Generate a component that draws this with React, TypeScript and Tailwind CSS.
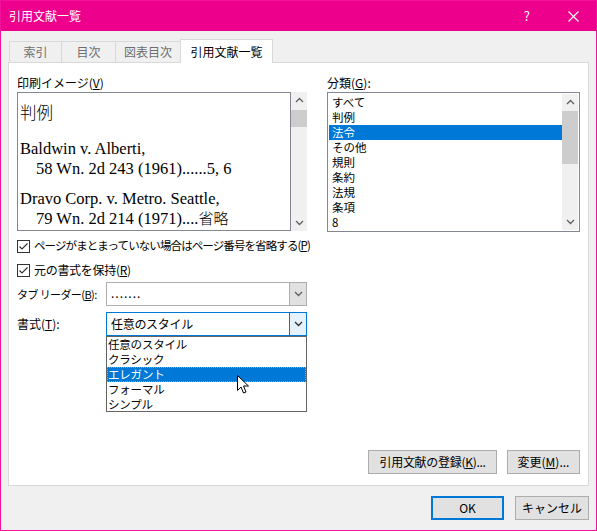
import React from 'react';

const ui = { fontFamily: '"Noto Sans CJK JP", "Noto Sans", sans-serif' };
const serif = { fontFamily: '"Liberation Serif", "Noto Sans CJK JP", serif' };

function Chevron({ dir = 'down', className = '' }: { dir?: 'up' | 'down'; className?: string }) {
    return (
        <svg width="9" height="6" viewBox="0 0 9 6" className={className}>
            <path
                d={dir === 'down' ? 'M1 1 L4.5 4.5 L8 1' : 'M1 5 L4.5 1.5 L8 5'}
                fill="none"
                stroke="currentColor"
                strokeWidth="1.3"
            />
        </svg>
    );
}

function Check({ label, hot, tight = false }: { label: string; hot: string; tight?: boolean }) {
    return (
        <div className="flex items-center h-[18px] gap-[4px]">
            <svg width="13" height="13" viewBox="0 0 13 13" className="shrink-0">
                <rect x="0.5" y="0.5" width="12" height="12" fill="#fff" stroke="#333" />
                <path d="M2.5 6.5 L5 9 L10.5 3.5" fill="none" stroke="#333" strokeWidth="1.2" />
            </svg>
            <span
                className={
                    'whitespace-nowrap text-black ' +
                    (tight ? 'text-[11.5px] tracking-[-0.9px]' : 'text-[12px] tracking-[-0.3px]')
                }
            >
                {label}(<span className="underline">{hot}</span>)
            </span>
        </div>
    );
}

function ScrollBar({ thumbTop, thumbH }: { thumbTop: number; thumbH: number }) {
    return (
        <div className="w-[16px] h-full bg-[#f0f0f0] relative flex flex-col items-center justify-between py-[5px] text-[#606060]">
            <Chevron dir="up" />
            <div
                className="absolute left-0 w-[16px] bg-[#cdcdcd]"
                style={{ top: thumbTop, height: thumbH }}
            />
            <Chevron dir="down" />
        </div>
    );
}

const categories = ['すべて', '判例', '法令', 'その他', '規則', '条約', '法規', '条項', '8'];
const styles = ['任意のスタイル', 'クラシック', 'エレガント', 'フォーマル', 'シンプル'];

export default function App() {
    return (
        <div
            className="w-[597px] h-[531px] border border-[#f3109a] bg-[#f0f0f0] flex flex-col overflow-hidden"
            style={ui}
        >
            {/* title bar */}
            <div className="h-[30px] bg-[#ec008c] flex items-center pl-[8px] text-white text-[12px] shrink-0">
                <span>引用文献一覧</span>
                <span className="ml-auto mr-[38px] text-[13px]">?</span>
                <svg width="11" height="11" viewBox="0 0 11 11" className="mr-[17px]">
                    <path d="M0.5 0.5 L10.5 10.5 M10.5 0.5 L0.5 10.5" stroke="#fff" strokeWidth="1.1" />
                </svg>
            </div>

            <div className="pl-[7px] pr-[7px] pt-[8px] flex flex-col">
                {/* tabs */}
                <div className="flex items-end h-[23px] pl-[1px] relative z-10">
                    {['索引', '目次', '図表目次'].map((t, i) => (
                        <div
                            key={t}
                            className={
                                'h-[21px] border-t border-l border-[#d9d9d9] flex items-center justify-center text-[12px] text-[#6d6d6d] ' +
                                (i === 0 ? 'w-[52px]' : i === 1 ? 'w-[54px]' : 'w-[65px]')
                            }
                        >
                            {t}
                        </div>
                    ))}
                    <div className="h-[24px] w-[93px] -mb-px bg-white border-t border-l border-r border-[#d9d9d9] flex items-center justify-center text-[12px] text-black">
                        引用文献一覧
                    </div>
                </div>

                {/* panel */}
                <div className="w-[581px] h-[424px] bg-white border border-[#d9d9d9] flex flex-col pl-[8px] pt-[11px] pr-[8px] pb-[11px]">
                    <div className="flex">
                        {/* left column */}
                        <div className="w-[290px] flex flex-col">
                            <div className="h-[18px] text-[12px] leading-[18px] text-black">
                                印刷イメージ(<span className="underline">V</span>)
                            </div>
                            <div className="h-[139px] flex">
                                <div
                                    className="w-[274px] h-full border border-[#828790] bg-white pl-[2px] pt-[11px] text-[16.5px] leading-[20px] text-black overflow-hidden whitespace-nowrap"
                                    style={serif}
                                >
                                    <div className="mb-[15px] font-light">判例</div>
                                    <div>Baldwin v. Alberti,</div>
                                    <div className="pl-[16px] mb-[10px]">58 Wn. 2d 243 (1961)......5, 6</div>
                                    <div>Dravo Corp. v. Metro. Seattle,</div>
                                    <div className="pl-[16px]">
                                        79 Wn. 2d 214 (1971)....<span className="text-[15px] font-light">省略</span>
                                    </div>
                                </div>
                                <ScrollBar thumbTop={18} thumbH={17} />
                            </div>

                            <div className="mt-[6px]">
                                <Check label="ページがまとまっていない場合はページ番号を省略する" hot="P" tight />
                            </div>
                            <div className="mt-[6px]">
                                <Check label="元の書式を保持" hot="R" />
                            </div>

                            <div className="mt-[3px] flex items-center h-[24px]">
                                <div className="w-[89px] text-[11px] text-black whitespace-nowrap tracking-[-0.6px]">
                                    タブ リーダー(<span className="underline">B</span>):
                                </div>
                                <div className="w-[201px] h-full border border-[#adadad] bg-white flex">
                                    <div className="flex-1 pl-[4px] text-[12px] leading-[20px] text-black tracking-[1px]">
                                        .......
                                    </div>
                                    <div className="w-[17px] h-full bg-[#e1e1e1] border-l border-[#adadad] flex items-center justify-center text-[#606060]">
                                        <Chevron />
                                    </div>
                                </div>
                            </div>

                            <div className="mt-[6px] flex items-center h-[24px] relative">
                                <div className="w-[89px] text-[12px] text-black whitespace-nowrap">
                                    書式(<span className="underline">T</span>):
                                </div>
                                <div className="w-[201px] h-full border border-[#0078d7] bg-white flex">
                                    <div className="flex-1 pl-[4px] text-[12px] leading-[22px] text-black tracking-[-0.3px]">
                                        任意のスタイル
                                    </div>
                                    <div className="w-[17px] h-full bg-[#e5f1fb] border-l border-[#0078d7] flex items-center justify-center text-[#303030]">
                                        <Chevron />
                                    </div>
                                </div>

                                {/* dropdown list */}
                                <div className="absolute left-[89px] top-[24px] w-[201px] h-[76px] bg-white border border-[#646464] flex flex-col z-20">
                                    {styles.map(s => (
                                        <div
                                            key={s}
                                            className={
                                                'h-[15px] leading-[15px] text-[11.5px] pl-[1px] tracking-[-0.2px] ' +
                                                (s === 'エレガント'
                                                    ? 'bg-[#0078d7] text-white outline-1 outline-dotted outline-[#ff8c00] -outline-offset-1'
                                                    : 'text-black')
                                            }
                                        >
                                            {s}
                                        </div>
                                    ))}
                                </div>
                                {/* mouse pointer */}
                                <svg
                                    width="13"
                                    height="20"
                                    viewBox="0 0 13 20"
                                    className="absolute left-[220px] top-[63px] z-30"
                                >
                                    <path
                                        d="M0.5 0.5 L0.5 15.5 L4 12 L6.5 18 L9 17 L6.5 11 L11.5 11 Z"
                                        fill="#fff"
                                        stroke="#000"
                                        strokeWidth="1"
                                    />
                                </svg>
                            </div>
                        </div>

                        {/* right column */}
                        <div className="w-[254px] ml-[20px] flex flex-col">
                            <div className="h-[18px] text-[12px] leading-[18px] text-black">
                                分類(<span className="underline">G</span>):
                            </div>
                            <div className="h-[140px] border border-[#828790] bg-white flex p-px">
                                <div className="flex-1 flex flex-col pt-px">
                                    {categories.map(c => (
                                        <div
                                            key={c}
                                            className={
                                                'h-[15px] leading-[15px] text-[11.5px] pl-[3px] ' +
                                                (c === '法令' ? 'bg-[#0078d7] text-white' : 'text-black')
                                            }
                                        >
                                            {c}
                                        </div>
                                    ))}
                                </div>
                                <ScrollBar thumbTop={17} thumbH={53} />
                            </div>
                        </div>
                    </div>

                    <div className="flex-1" />

                    <div className="flex justify-end gap-[10px]">
                        <button className="w-[129px] h-[24px] bg-[#e1e1e1] border border-[#adadad] text-[12px] text-black whitespace-nowrap tracking-[-0.3px]">
                            引用文献の登録(<span className="underline">K</span>)...
                        </button>
                        <button className="w-[73px] h-[24px] bg-[#e1e1e1] border border-[#adadad] text-[12px] text-black whitespace-nowrap">
                            変更(<span className="underline">M</span>)...
                        </button>
                    </div>
                </div>

                {/* dialog buttons */}
                <div className="flex justify-end gap-[11px] mt-[10px]">
                    <button className="w-[73px] h-[24px] bg-[#e1e1e1] border-2 border-[#0078d7] text-[12px] text-black">
                        OK
                    </button>
                    <button className="w-[74px] h-[24px] bg-[#e1e1e1] border border-[#adadad] text-[12px] text-black">
                        キャンセル
                    </button>
                </div>
            </div>
        </div>
    );
}
